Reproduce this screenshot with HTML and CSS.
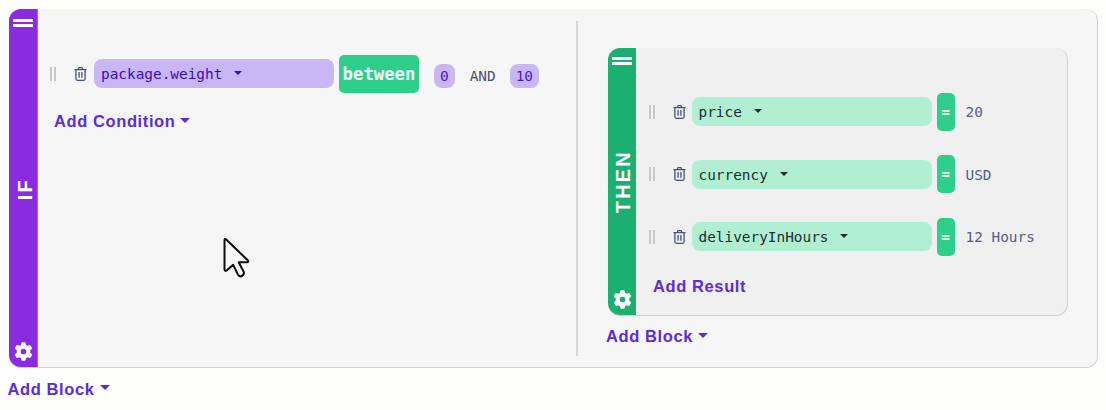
FILE: index.html
```
<!DOCTYPE html>
<html lang="en">
<head>
<meta charset="utf-8">
<title>Rule builder</title>
<link rel="stylesheet" href="styles.css">
</head>
<body>
<svg class="defs" width="0" height="0">
  <symbol id="trash" viewBox="0 0 13 14">
    <path d="M.5 2.700h12M4.200 2.500 4.900.7h3.200l.7 1.800M1.900 2.900v8.900q0 1.500 1.500 1.500h6.200q1.500 0 1.500-1.500V2.900M5.100 5v5.800M7.900 5v5.800" fill="none" stroke="currentColor" stroke-width="1.300" stroke-linejoin="round"/>
  </symbol>
  <symbol id="gear" viewBox="0 0 24 24">
    <path fill="currentColor" fill-rule="evenodd" d="M9.300 1.200Q9.500.3 10.400.3h3.200q.9 0 1.100.9l.5 2.500q1 .4 2 1.100l2.400-.9q.9-.3 1.400.5l1.600 2.900q.4.8-.2 1.400l-1.900 1.700q.2 1.600 0 3.200l1.900 1.700q.6.6.2 1.400L21 19.600q-.5.8-1.400.5l-2.400-.9q-1 .7-2 1.100l-.5 2.500q-.2.9-1.100.9h-3.200q-.9 0-1.100-.9l-.5-2.500q-1-.4-2-1.100l-2.400.9q-.9.3-1.400-.5L1.400 16.700q-.4-.8.2-1.400l1.900-1.700q-.2-1.600 0-3.200L1.600 8.700q-.6-.6-.2-1.400L3 4.400q.5-.8 1.400-.5l2.400.9q1-.7 2-1.100ZM12 8.400a3.600 3.600 0 1 0 0 7.200 3.600 3.600 0 0 0 0-7.200Z"/>
  </symbol>
</svg>

<section class="block outer">
  <aside class="rail rail-if">
    <span class="grip"></span>
    <span class="rail-label">IF</span>
    <svg class="gear"><use href="#gear"/></svg>
  </aside>
  <div class="conditions">
    <div class="row">
      <span class="handle"></span>
      <svg class="trash"><use href="#trash"/></svg>
      <div class="field field-if">package.weight<i class="caret"></i></div>
      <div class="operator wide">between</div>
      <span class="chip chip-first">0</span>
      <span class="and">AND</span>
      <span class="chip">10</span>
    </div>
    <div class="add add-condition"><span>Add Condition</span><i class="caret big"></i></div>
  </div>
  <div class="results">
    <section class="block inner">
      <aside class="rail rail-then">
        <span class="grip"></span>
        <span class="rail-label">THEN</span>
        <svg class="gear"><use href="#gear"/></svg>
      </aside>
      <div class="result-list">
        <div class="row">
          <span class="handle"></span>
          <svg class="trash"><use href="#trash"/></svg>
          <div class="field field-then">price<i class="caret"></i></div>
          <div class="operator">=</div>
          <span class="value">20</span>
        </div>
        <div class="row">
          <span class="handle"></span>
          <svg class="trash"><use href="#trash"/></svg>
          <div class="field field-then">currency<i class="caret"></i></div>
          <div class="operator">=</div>
          <span class="value">USD</span>
        </div>
        <div class="row">
          <span class="handle"></span>
          <svg class="trash"><use href="#trash"/></svg>
          <div class="field field-then">deliveryInHours<i class="caret"></i></div>
          <div class="operator">=</div>
          <span class="value">12 Hours</span>
        </div>
        <div class="add add-result"><span>Add Result</span></div>
      </div>
    </section>
    <div class="add add-inner"><span>Add Block</span><i class="caret big"></i></div>
  </div>
</section>
<div class="add add-outer"><span>Add Block</span><i class="caret big"></i></div>

<svg class="cursor" viewBox="0 0 28 42">
  <path d="M2.500 3.200Q2.500 1 4.200 2.600L26 23.500Q27 25.200 25 25.300H16.700L21.800 35Q22.300 38 19.300 39.200 17.300 40 15.900 37.500L11.100 27.800 4.700 33.500Q2.500 34.500 2.500 32Z" fill="#f8f8f8" stroke="#0c0c0c" stroke-width="2" stroke-linejoin="round"/>
</svg>
</body>
</html>
```

FILE: styles.css
```
* { box-sizing: border-box; }

body {
  margin: 0;
  padding: 9px 8px 0 9px;
  width: 1106px;
  height: 410px;
  overflow: hidden;
  background: #fefefd;
  font-family: "DejaVu Sans Mono", monospace;
  font-size: 14.4px;
}

.defs { position: absolute; }

.block {
  display: flex;
  border-right: 1px solid #cfd0d8;
  border-bottom: 1px solid #cfd0d4;
  border-radius: 12px;
}

.outer { height: 358.500px; background: #f6f6f7; }
.inner { width: 460px; height: 268px; background: #f0f0f0; }

.rail {
  display: flex;
  flex-direction: column;
  align-items: center;
  justify-content: space-between;
  flex: none;
  width: 28px;
  color: #fff;
  border-radius: 12px 0 0 12px;
}

.rail-if { width: 29px; padding: 10px 0 6px; background: #8a2be2; border-right: 1px solid #a565e8; }
.rail-then { padding: 9px 0 6px; background: #1cb070; }

.grip {
  width: 20px;
  height: 8px;
  border: solid #fff;
  border-width: 3px 0;
}

.rail-label {
  margin-top: 9px;
  writing-mode: vertical-rl;
  transform: rotate(180deg);
  font: bold 20px/20px "Liberation Sans", sans-serif;
  letter-spacing: 2.200px;
}

.rail-if .rail-label { margin-left: 3px; }
.rail-then .rail-label { margin-left: 2px; }

.gear { width: 19px; height: 19px; }

.conditions {
  width: 540px;
  margin: 12px 0 11px;
  padding: 33px 0 0 12px;
  border-right: 2px solid #d5d5d8;
}

.results { padding: 39px 0 0 30px; }

.result-list { padding: 44px 0 0 12.500px; }

.row { display: flex; align-items: center; height: 39px; }
.result-list .row { margin-bottom: 23.500px; }

.handle {
  width: 6px;
  height: 14px;
  margin-right: 19px;
  border: solid #c9c7c9;
  border-width: 0 2px;
}

.trash { width: 13px; height: 14px; margin: 0 7px 0 -1px; color: #46517c; }

.field {
  display: flex;
  align-items: center;
  gap: 12px;
  width: 240px;
  height: 29px;
  padding: 1px 0 0 7px;
  border-radius: 8px;
  margin-right: 5px;
}

.field-if { background: #c8b6f5; color: #3a0ac8; }
.field-then { margin-left: -1px; background: #b1efd2; color: #17302b; }

.caret {
  border: solid transparent;
  border-width: 4px 4px 0;
  border-top-color: currentColor;
  margin-top: -2px;
}

.caret.big { border-width: 5px 5px 0; margin-top: -2px; }

.operator {
  width: 18px;
  height: 38px;
  border-radius: 5px;
  background: #2ecf8b;
  color: #effff7;
  text-align: center;
  font-weight: bold;
  line-height: 39px;
}

.operator.wide { width: 80px; font-size: 17.300px; }

.chip {
  height: 24px;
  padding: 0 6px;
  border-radius: 8px;
  background: #c8b6f5;
  color: #4a16dc;
  line-height: 24px;
  margin-top: 4px;
}

.chip-first { margin-left: 15px; }
.and { margin: 4px 14px 0 15px; color: #4c4f68; }
.value { margin: 1px 0 0 11px; color: #555d85; }

.add {
  display: flex;
  align-items: center;
  gap: 5px;
  height: 20px;
  color: #5b2be0;
  font: bold 16.500px/20px "Liberation Sans", sans-serif;
  letter-spacing: .6px;
}

.add-condition { margin: 18px 0 0 4px; }
.add-result { margin: -4px 0 0 4.500px; }
.add-inner { margin: 10px 0 0 -2px; }
.add-outer { margin: 11px 0 0 -1.500px; }

.cursor { position: absolute; left: 222px; top: 237px; width: 28px; height: 42px; }
```
